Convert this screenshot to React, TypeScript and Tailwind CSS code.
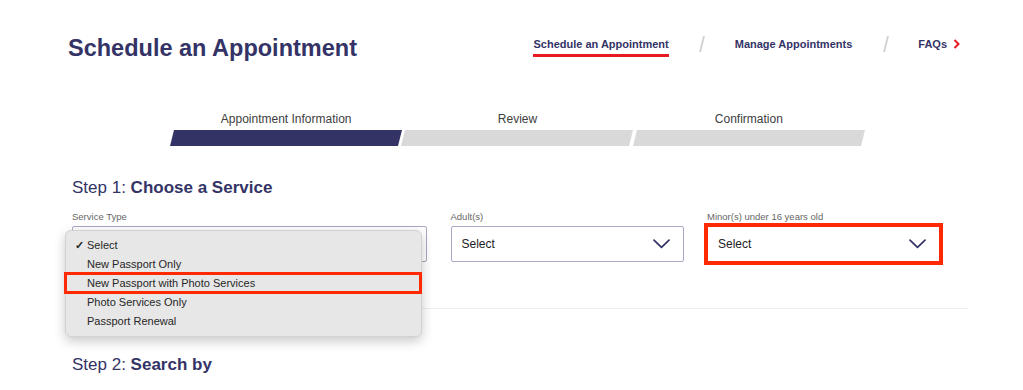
import React from "react";

const NAVY = "#333366";

function Chevron() {
  return (
    <svg width="17" height="10" viewBox="0 0 17 10" fill="none">
      <path d="M1 1.2 L8.5 8.4 L16 1.2" stroke={NAVY} strokeWidth="1.7" strokeLinecap="round" strokeLinejoin="round" />
    </svg>
  );
}

function Slash() {
  return (
    <div className="w-[6px] h-[16px] flex justify-center mt-[-1px]">
      <div className="w-[1.5px] h-[16px] bg-[#d4d4d4] skew-x-[-14deg]" />
    </div>
  );
}

export default function App() {
  const font = { fontFamily: '"Liberation Sans", Arial, Helvetica, sans-serif' };
  return (
    <div className="w-[1023px] h-[390px] bg-white overflow-hidden relative" style={font}>
      {/* Header */}
      <div className="flex items-start justify-between pl-[68px] pr-[63px] pt-[34px]">
        <h1 className="text-[23.5px] leading-[28px] font-bold text-[#333366]">Schedule an Appointment</h1>
        <nav className="flex items-start gap-[30px] pt-[3px] text-[11px] leading-[14px] font-bold text-[#333366]">
          <div className="flex flex-col">
            <span>Schedule an Appointment</span>
            <div className="mt-[3px] h-[3px] bg-[#e71921]" />
          </div>
          <Slash />
          <span>Manage Appointments</span>
          <Slash />
          <span className="flex items-center gap-[6px]">
            FAQs
            <svg width="7" height="10" viewBox="0 0 7 10" fill="none">
              <path d="M1.5 1 L5.5 5 L1.5 9" stroke="#e71921" strokeWidth="2" />
            </svg>
          </span>
        </nav>
      </div>

      {/* Progress */}
      <div className="ml-[172px] mt-[50px] w-[691px]">
        <div className="grid grid-cols-3 gap-[3px] text-[12px] leading-[14px] text-[#404040] text-center">
          <span>Appointment Information</span>
          <span>Review</span>
          <span>Confirmation</span>
        </div>
        <div className="grid grid-cols-3 gap-[3px] mt-[4px]">
          <div className="h-[16px] bg-[#333366] skew-x-[-14deg]" />
          <div className="h-[16px] bg-[#d9d9d9] skew-x-[-14deg]" />
          <div className="h-[16px] bg-[#d9d9d9] skew-x-[-14deg]" />
        </div>
      </div>

      {/* Step 1 */}
      <div className="pl-[72px] mt-[31px]">
        <h2 className="text-[17px] leading-[22px] text-[#333366]">
          Step 1: <span className="font-bold">Choose a Service</span>
        </h2>
        <div className="mt-[12px] flex gap-[23.5px]">
          <div className="w-[355px] flex flex-col">
            <label className="text-[9.5px] leading-[12px] text-[#666] mb-[3px]">Service Type</label>
            <div className="relative h-[36px] border border-[#a9a8c6] rounded-[2px] bg-white">
              {/* open dropdown menu */}
              <div className="absolute left-[-8px] top-[3px] w-[357px] py-[5px] bg-[#e7e7e7] border border-[#d2d2d2] rounded-[6px] shadow-[0_4px_12px_rgba(0,0,0,0.22)] z-10 text-[11px] text-[#262626]">
                {[
                  "Select",
                  "New Passport Only",
                  "New Passport with Photo Services",
                  "Photo Services Only",
                  "Passport Renewal",
                ].map((t, i) => (
                  <div key={t} className="h-[19px] flex items-center pl-[21px] relative">
                    {i === 0 && <span className="absolute left-[9px] text-[11px] font-bold">✓</span>}
                    {t}
                  </div>
                ))}
                <div className="absolute left-[-2px] right-[-1px] top-[41px] h-[22px] border-[3px] border-[#ff2a00]" />
              </div>
            </div>
          </div>
          <div className="w-[233px] flex flex-col">
            <label className="text-[9.5px] leading-[12px] text-[#666] mb-[3px]">Adult(s)</label>
            <div className="h-[36px] border border-[#a9a8c6] rounded-[2px] bg-white flex items-center justify-between pl-[10px] pr-[13px] text-[12px] text-[#222]">
              <span>Select</span>
              <Chevron />
            </div>
          </div>
          <div className="w-[233px] flex flex-col">
            <label className="text-[9.5px] leading-[12px] text-[#666] mb-[3px]">Minor(s) under 16 years old</label>
            <div className="h-[36px] border border-[#ff2a00] outline-[3px] outline-solid outline-[#ff2a00] bg-white flex items-center justify-between pl-[10px] pr-[13px] text-[12px] text-[#222]">
              <span>Select</span>
              <Chevron />
            </div>
          </div>
        </div>
        <div className="mt-[46px] w-[896px] h-px bg-[#eeeeee]" />
        <h2 className="mt-[45px] text-[17px] leading-[22px] text-[#333366]">
          Step 2: <span className="font-bold">Search by</span>
        </h2>
      </div>
    </div>
  );
}
